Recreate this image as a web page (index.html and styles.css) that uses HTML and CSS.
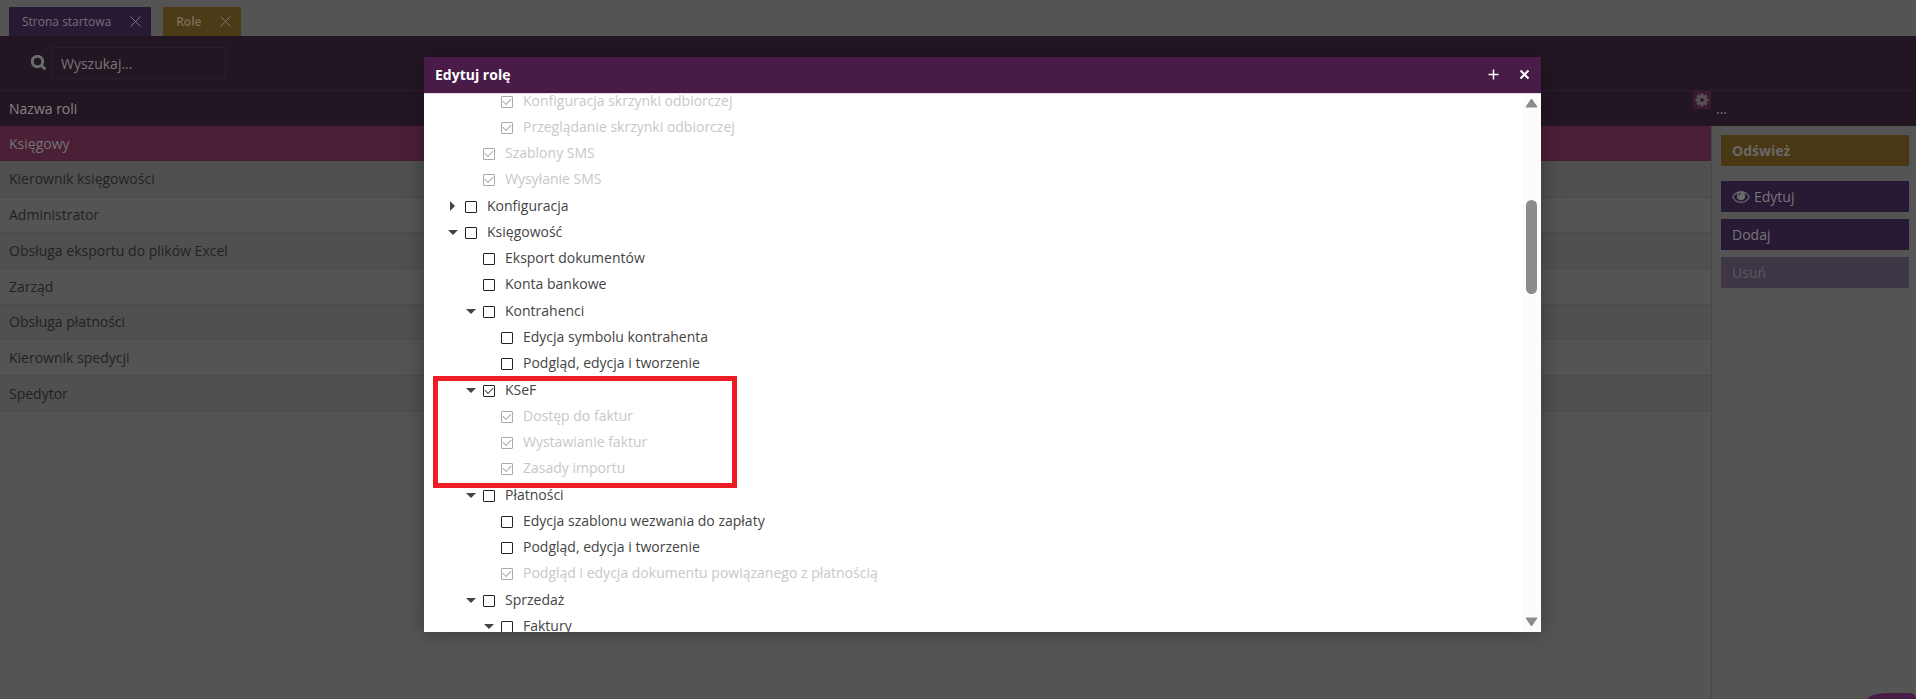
FILE: index.html
```
<!DOCTYPE html>
<html lang="pl">
<head>
    <meta charset="UTF-8">
    <meta name="viewport" content="width=device-width, initial-scale=1.0">
    <title>Role</title>
    <link rel="stylesheet" href="styles.css">
</head>
<body>

    <!-- Open tabs -->
    <nav class="tabs">
        <div class="tab">
            <a href="#">Strona startowa</a>
            <button type="button" class="tab-close" aria-label="Zamknij">
                <svg width="11" height="11" viewBox="0 0 11 11"><path d="M.5.5l10 10M10.500.5l-10 10"/></svg>
            </button>
        </div>
        <div class="tab active">
            <a href="#">Role</a>
            <button type="button" class="tab-close" aria-label="Zamknij">
                <svg width="11" height="11" viewBox="0 0 11 11"><path d="M.5.5l10 10M10.500.5l-10 10"/></svg>
            </button>
        </div>
    </nav>

    <!-- Search -->
    <div class="toolbar">
        <label for="search" aria-label="Wyszukaj">
            <svg width="16" height="16" viewBox="0 0 16 16"><circle cx="6.500" cy="6.500" r="5.200"/><path d="M10.500 10.500l4 4"/></svg>
        </label>
        <input type="text" id="search" placeholder="Wyszukaj...">
    </div>

    <div class="content">
        <!-- List of roles -->
        <div class="list">
            <table class="roles">
                <thead>
                    <tr><th>Nazwa roli</th></tr>
                </thead>
                <tbody>
                    <tr class="selected"><td>Księgowy</td></tr>
                    <tr><td>Kierownik księgowości</td></tr>
                    <tr><td>Administrator</td></tr>
                    <tr><td>Obsługa eksportu do plików Excel</td></tr>
                    <tr><td>Zarząd</td></tr>
                    <tr><td>Obsługa płatności</td></tr>
                    <tr><td>Kierownik spedycji</td></tr>
                    <tr><td>Spedytor</td></tr>
                </tbody>
            </table>
            <button type="button" class="gear" aria-label="Ustawienia">
                <svg width="14" height="14" viewBox="0 0 14 14">
                    <path d="M7 .5v13M.5 7h13M2.400 2.400l9.200 9.200M11.600 2.400l-9.200 9.200"/>
                    <circle class="ring" cx="7" cy="7" r="4.500"/>
                    <circle class="hole" cx="7" cy="7" r="2"/>
                </svg>
            </button>
        </div>

        <!-- Actions -->
        <aside class="side">
            <div class="side-head">...</div>
            <div class="actions">
                <button type="button" class="btn refresh">Odśwież</button>
                <button type="button" class="btn">
                    <svg width="18" height="12" viewBox="0 0 18 12"><path fill-rule="evenodd" d="M0 6C2 2.300 5.200 0 9 0s7 2.300 9 6c-2 3.700-5.200 6-9 6S2 9.700 0 6zm1.400 0c1.500 2.700 4.300 4.800 7.600 4.800s6.100-2.100 7.600-4.800C15.800 4.500 14.600 3.200 13 2.300a4.800 4.800 0 0 1-8 0C3.400 3.200 2.200 4.500 1.400 6z"/><circle cx="9" cy="5" r="4.200"/><path class="shine" d="M6.500 5c0-1.500 1-2.500 2.500-2.500"/></svg>
                    Edytuj
                </button>
                <button type="button" class="btn">Dodaj</button>
                <button type="button" class="btn" disabled>Usuń</button>
            </div>
        </aside>
    </div>

    <button type="button" class="chat" aria-label="Czat"></button>

    <!-- Edit window -->
    <div class="modal" role="dialog" aria-labelledby="modalTitle">
        <header class="modal-head">
            <h1 id="modalTitle">Edytuj rolę</h1>
            <button type="button" class="modal-btn" aria-label="Powiększ">
                <svg width="11" height="11" viewBox="0 0 11 11"><path d="M5.500.5v10M.5 5.500h10"/></svg>
            </button>
            <button type="button" class="modal-btn" aria-label="Zamknij">
                <svg class="bold" width="11" height="11" viewBox="0 0 11 11"><path d="M1.500 1.500l8 8M9.500 1.500l-8 8"/></svg>
            </button>
        </header>

        <div class="modal-body">
            <div class="viewport">
                <ul class="tree">
                    <li>
                        <ul>
                            <li>
                                <ul>
                                    <li><label><input type="checkbox" checked disabled>Konfiguracja skrzynki odbiorczej</label></li>
                                    <li><label><input type="checkbox" checked disabled>Przeglądanie skrzynki odbiorczej</label></li>
                                </ul>
                            </li>
                            <li><label><input type="checkbox" checked disabled>Szablony SMS</label></li>
                            <li><label><input type="checkbox" checked disabled>Wysyłanie SMS</label></li>
                        </ul>
                    </li>
                    <li class="closed"><label><input type="checkbox">Konfiguracja</label></li>
                    <li class="open">
                        <label><input type="checkbox">Księgowość</label>
                        <ul>
                            <li><label><input type="checkbox">Eksport dokumentów</label></li>
                            <li><label><input type="checkbox">Konta bankowe</label></li>
                            <li class="open">
                                <label><input type="checkbox">Kontrahenci</label>
                                <ul>
                                    <li><label><input type="checkbox">Edycja symbolu kontrahenta</label></li>
                                    <li><label><input type="checkbox">Podgląd, edycja i tworzenie</label></li>
                                </ul>
                            </li>
                            <li class="open">
                                <label><input type="checkbox" checked>KSeF</label>
                                <ul>
                                    <li><label><input type="checkbox" checked disabled>Dostęp do faktur</label></li>
                                    <li><label><input type="checkbox" checked disabled>Wystawianie faktur</label></li>
                                    <li><label><input type="checkbox" checked disabled>Zasady importu</label></li>
                                </ul>
                                <div class="frame"></div>
                            </li>
                            <li class="open">
                                <label><input type="checkbox">Płatności</label>
                                <ul>
                                    <li><label><input type="checkbox">Edycja szablonu wezwania do zapłaty</label></li>
                                    <li><label><input type="checkbox">Podgląd, edycja i tworzenie</label></li>
                                    <li><label><input type="checkbox" checked disabled>Podgląd i edycja dokumentu powiązanego z płatnością</label></li>
                                </ul>
                            </li>
                            <li class="open">
                                <label><input type="checkbox">Sprzedaż</label>
                                <ul>
                                    <li class="open"><label><input type="checkbox">Faktury</label></li>
                                </ul>
                            </li>
                        </ul>
                    </li>
                </ul>
            </div>

            <div class="scrollbar">
                <svg width="13" height="10" viewBox="0 0 13 10"><path d="M6.500 1L12 9H1z"/></svg>
                <div class="track"><div class="thumb"></div></div>
                <svg width="13" height="10" viewBox="0 0 13 10"><path d="M6.500 9L12 1H1z"/></svg>
            </div>
        </div>
    </div>

</body>
</html>
```
FILE: styles.css
```
/* General */
* {
    box-sizing: border-box;
}

body {
    margin: 0;
    height: 100vh;
    overflow: hidden;
    display: flex;
    flex-direction: column;
    font-family: "Open Sans", "Noto Sans", sans-serif;
    font-size: 14px;
    background: #545454;
    color: #222;
}

button, input {
    font: inherit;
    color: inherit;
    margin: 0;
}

button {
    border: none;
    background: none;
    padding: 0;
    text-align: left;
}

a {
    color: inherit;
    text-decoration: none;
}

svg {
    display: block;
    flex: none;
}

/* Tabs */
.tabs {
    display: flex;
    gap: 12px;
    padding: 7px 9px 0;
}

.tab {
    display: flex;
    align-items: center;
    gap: 19px;
    height: 29px;
    padding: 0 10px 0 13px;
    font-size: 12px;
    background: #281a35;
    color: #75707a;
}

.tab.active {
    background: #4d3a16;
    color: #7c7058;
    font-weight: 600;
}

.tab-close svg {
    fill: none;
    stroke: #7c7880;
    stroke-width: 1;
}

/* Search bar */
.toolbar {
    display: flex;
    align-items: center;
    gap: 4px;
    height: 55px;
    padding: 0 31px;
    background: #231623;
    border-bottom: 1px solid #301a30;
}

.toolbar svg {
    fill: none;
    stroke: #6b6b6b;
    stroke-width: 3;
}

.toolbar input {
    width: 175px;
    height: 32px;
    padding: 0 9px;
    background: none;
    border: 1px solid #301a30;
    color: #777;
}

.toolbar input::placeholder {
    color: #777;
    opacity: 1;
}

/* Roles */
.content {
    flex: 1;
    display: flex;
}

.list {
    flex: 1;
    position: relative;
}

.roles {
    width: 100%;
    border-collapse: collapse;
}

.roles th, .roles td {
    height: 36px;
    padding: 0 9px;
    text-align: left;
    font-weight: normal;
}

.roles th {
    height: 35px;
    background: #231623;
    color: #858585;
}

.roles td {
    border-bottom: 1px solid #4b4b4b;
}

.roles tr:nth-child(3n) td {
    height: 35px;
}

.roles tr:nth-child(even) td {
    background: #505050;
}

.roles .selected td {
    height: 35px;
    background: #4b1f36;
    border-bottom: none;
    color: #747474;
}

.gear {
    position: absolute;
    top: 0;
    right: 0;
    padding: 2px;
    background: #3a1a2d;
}

.gear svg {
    fill: none;
    stroke: #565053;
    stroke-width: 3;
}

.gear .ring {
    fill: #565053;
    stroke: none;
}

.gear .hole {
    fill: #3a1a2d;
    stroke: none;
}

/* Actions */
.side {
    display: flex;
    flex-direction: column;
    width: 205px;
}

.side-head {
    height: 35px;
    padding: 8px 5px;
    background: #231623;
    color: #777;
}

.actions {
    flex: 1;
    display: flex;
    flex-direction: column;
    gap: 7px;
    padding: 9px;
    padding-right: 7px;
    border-left: 1px solid #484848;
}

.btn {
    display: flex;
    align-items: center;
    gap: 4px;
    height: 31px;
    padding: 0 11px;
    background: #281a35;
    color: #777;
}

.btn svg {
    fill: #6b6b6b;
}

.btn .shine {
    fill: none;
    stroke: #281a35;
}

.btn.refresh {
    margin-bottom: 8px;
    background: #4a3814;
    color: #686868;
    font-weight: bold;
}

.btn:disabled {
    background: #3e3645;
    color: #5c5760;
}

/* Only the top of the chat button shows */
.chat {
    position: absolute;
    right: 0;
    bottom: 0;
    width: 48px;
    height: 6px;
    border-radius: 20px 6px 0 0 / 6px 6px 0 0;
    background: #481c46;
}

/* Edit window */
.modal {
    position: absolute;
    inset: 57px 375px 67px 424px;
    display: flex;
    flex-direction: column;
    background: #fff;
    color: #444;
    box-shadow: 0 0 20px rgba(0, 0, 0, 0.3);
}

.modal-head {
    display: flex;
    align-items: center;
    gap: 20px;
    height: 37px;
    padding: 0 11px 1px;
    background: #481c46;
    border-bottom: 1px solid #e6dce6;
    color: #fff;
}

.modal-head h1 {
    flex: 1;
    margin: 0;
    font-size: 14px;
}

.modal-btn svg {
    fill: none;
    stroke: #fff;
    stroke-width: 1.500;
}

.modal-btn .bold {
    stroke-width: 2;
}

.modal-body {
    flex: 1;
    min-height: 0;
    display: flex;
}

.viewport {
    flex: 1;
    overflow: hidden;
}

/* Tree, scrolled down a little */
.tree {
    margin: -7px 0 0;
    padding-left: 24px;
}

.tree, .tree ul {
    list-style: none;
}

.tree ul {
    margin: 0;
    padding: 0 0 0 18px;
}

.tree > .open > ul > .open {
    margin-top: 1px;
}

.tree > li:first-child {
    padding-bottom: 1px;
}

.tree li {
    position: relative;
}

.tree label {
    display: flex;
    align-items: center;
    gap: 10px;
    height: 26px;
    padding-left: 17px;
}

.tree label:has(:disabled) {
    color: #c8c8c8;
}

.tree input {
    appearance: none;
    display: grid;
    place-items: center;
    width: 12px;
    height: 12px;
    margin-top: 3px;
    border: 1px solid #222;
    border-radius: 1px;
}

.tree input:checked::before {
    content: "";
    width: 7px;
    height: 4px;
    margin-bottom: 2px;
    border: solid #444;
    border-width: 0 0 1px 1px;
    transform: rotate(-45deg);
}

.tree input:disabled {
    border-color: #aaa;
}

.tree input:disabled::before {
    border-color: #aaa;
}

/* Arrows */
.open::before, .closed::before {
    content: "";
    position: absolute;
    top: 12px;
    left: 0;
    border: 5px solid transparent;
    border-top-color: #444;
    border-bottom: none;
}

.closed::before {
    top: 9px;
    left: 2px;
    border: 5px solid transparent;
    border-left-color: #444;
    border-right: none;
}

/* Marked branch */
.frame {
    position: absolute;
    top: 0;
    bottom: -8px;
    left: -33px;
    width: 304px;
    border: 5px solid #ee1c25;
}

/* Scrollbar */
.scrollbar {
    display: flex;
    flex-direction: column;
    align-items: center;
    width: 19px;
    padding: 4px 0 5px;
    background: #fcfcfc;
}

.scrollbar svg {
    fill: #8b8b8b;
    stroke: #8b8b8b;
    stroke-linejoin: round;
}

.track {
    flex: 1;
    padding-top: 92px;
}

.thumb {
    width: 11px;
    height: 94px;
    border-radius: 6px;
    background: #8b8b8b;
}
```
